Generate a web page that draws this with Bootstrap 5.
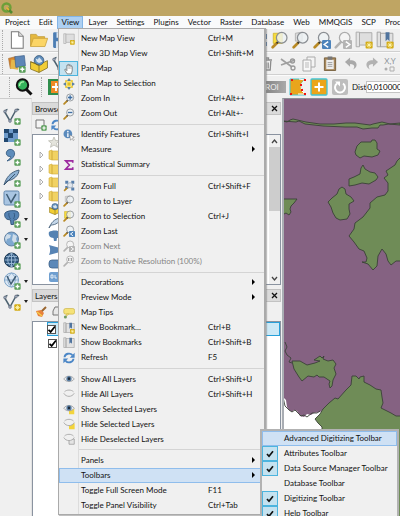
<!DOCTYPE html>
<html lang="en">
<head>
<meta charset="utf-8">
<meta name="viewport" content="width=device-width, initial-scale=1">
<title>QGIS</title>
<link href="https://cdn.jsdelivr.net/npm/bootstrap@5.3.0/dist/css/bootstrap.min.css" rel="stylesheet">
<style>
  body { font: 8px/10px Lato, "Liberation Sans", sans-serif; color: #111; background: #f0f0f0; }
  svg { display: block; flex: none; }
  button { font: inherit; color: inherit; border: 0; background: none; padding: 0; }
  .titlebar { height: 16px; background: #bfa563; padding-left: 1px; }
  .menubar { height: 13px; background: #f9fafb; }
  .menubar .nav-link { padding: 0 4px 0 5px; line-height: 13px; color: #111; font-size: 8px; border: 0; }
  .menubar .nav-link.show { background: #add0f2; box-shadow: inset 0 0 0 1px #83b5e6; }
  .toolrow { height: 23px; border-bottom: 1px solid #d0d0d0; }
  .toolrow + .toolrow { border-top: 1px solid #fbfbfb; }
  .lead-tools { flex: 0 0 258px; padding-left: 2px; }
  .lead-tools.indent { padding-left: 9px; }
  .tools { gap: 3px; }
  .grip { width: 2px; height: 20px; border-left: 1px dotted #aaa; }
  .ic18 { width: 18px; height: 18px; }
  .ic12 { width: 12px; height: 12px; }
  .roi { width: 28px; height: 12px; background: linear-gradient(90deg, #777, #aaa); color: #eee; }
  .dist { width: 60px; height: 12px; border: 1px solid #c4c4c4; background: #fff; padding: 0; font: inherit; flex: none; }
  .sidebar { width: 32px; padding-top: 8px; border-right: 1px solid #e2e2e2; border-top: 1px solid #ccc; }
  .side-tools { height: 204px; padding-left: 3px; }
  .caret { border: 2px solid transparent; border-top: 3px solid #222; border-bottom: 0; margin-left: 3px; }
  .docks { width: 250px; padding-right: 1px; }
  .dock-head { height: 13px; background: #dadada; border: 1px solid #c2c2c2; padding: 0 2px; }
  .dock-tools { height: 19px; padding-left: 3px; }
  .tree { height: 151px; background: #fff; border: 1px solid #8a93a0; padding-left: 6px; }
  .scroller { width: 11px; background: #f0f0f0; }
  .thumb { height: 64px; background: #cdcdcd; }
  .layers { background: #fff; border: 1px solid #8a93a0; border-bottom: 0; }
  .layer-row { height: 14px; padding-left: 15px; }
  .layer-row.active { background: #cbe8f6; box-shadow: inset 0 0 0 1px #26a0da; }
  .layer-row input { appearance: none; width: 9px; height: 9px; border: 1px solid #555; background: #fff; margin: 0; }
  .layer-row input:checked { background: #fff url("data:image/svg+xml,%3Csvg xmlns='http://www.w3.org/2000/svg' viewBox='0 0 8 8'%3E%3Cpath d='M1 4l2 2 4-5' fill='none' stroke='%23000' stroke-width='1.6'/%3E%3C/svg%3E") center/8px no-repeat; }
  .blank { width: 14px; flex: none; background: #fff; }
  .map { border-left: 2px solid #a9adb3; border-top: 1px solid #8d8d95; background: #fff; }
  .popup { --bs-dropdown-bg: #f0f0f0; --bs-dropdown-border-radius: 0; --bs-dropdown-min-width: 0; --bs-dropdown-padding-y: 0; position: absolute; font-size: 8px; color: #111; border: 1px solid #aaa; }
  .popup .dropdown-item { height: 15px; padding: 0; color: #111; line-height: 15px; }
  .popup .dropdown-item:disabled { color: #858585; }
  .popup .dropdown-item.hot { background: #cfe1f4; box-shadow: inset 0 0 0 1px #8fbdec; }
  .view-menu { left: 58px; top: 28px; bottom: 1px; width: 208px; box-shadow: 1px 1px 1px #8888; border-right: 2px solid #aaa; padding-top: 2px; padding-bottom: 1px; background-image: linear-gradient(90deg, transparent 19px, #dcdcdc 19px, #dcdcdc 20px, transparent 20px); }
  .icon-cell { width: 19px; height: 15px; }
  .icon-cell.on { background: #c4e2f0; box-shadow: inset 0 0 0 1px #4cb4de; }
  .caption { padding-left: 3px; }
  .keys { width: 56px; }
  .rule { flex: 1; margin-left: 20px; background: linear-gradient(#d4d4d4, #d4d4d4) center/100% 1px no-repeat; }
  .arrow { border: 3px solid transparent; border-left: 3px solid #000; border-right: 0; margin: 4px 0 0 44px; width: 0; height: 0; }
  .bars-menu { left: 260px; right: 1px; top: 429px; border-width: 2px; border-color: #b2b2b2; }
  .bars-menu input { appearance: none; width: 16px; height: 15px; margin: 0; flex: none; }
  .bars-menu input:checked { background: #c4e2f0 url("data:image/svg+xml,%3Csvg xmlns='http://www.w3.org/2000/svg' viewBox='0 0 8 8'%3E%3Cpath d='M1 4l2 2.200 4-5' fill='none' stroke='%23111' stroke-width='1.700'/%3E%3C/svg%3E") center/8px no-repeat; box-shadow: inset 0 0 0 1px #4cb4de; }
  .bars-menu .caption { padding-left: 6px; }
</style>
<script src="https://cdn.jsdelivr.net/npm/bootstrap@5.3.0/dist/js/bootstrap.bundle.min.js"></script>
</head>
<body class="vh-100 overflow-hidden d-flex flex-column position-relative">
<svg width="0" height="0" class="position-absolute" aria-hidden="true">
  <defs>
    <symbol id="plus" viewBox="0 0 6 6"><rect x=".3" y=".3" width="5.400" height="5.400" rx="1" fill="#5a9e5a"/><path d="M3 1.300v3.400M1.300 3h3.400" stroke="#fff" stroke-width="1.200"/></symbol>
    <symbol id="star" viewBox="0 0 6 6"><rect x=".3" y=".3" width="5.400" height="5.400" rx=".8" fill="#d4ac16"/><path d="M3 1v4M1 3h4M1.700 1.700l2.600 2.600M4.300 1.700L1.700 4.300" stroke="#fff6b0" stroke-width=".7"/></symbol>
    <symbol id="glass" viewBox="0 0 16 16"><path d="M1.500 14.500l4-4" stroke="#b98a24" stroke-width="2.400" stroke-linecap="round"/><path d="M5 11l1.500-1.500" stroke="#333" stroke-width="1.500"/><circle cx="9.500" cy="6" r="4.700" fill="#eef2f5" fill-opacity=".8" stroke="#8b8f94" stroke-width="1.100"/></symbol>
    <symbol id="glassoff" viewBox="0 0 16 16"><path d="M1.500 14.500l5-5" stroke="#b2b2b2" stroke-width="2.200" stroke-linecap="round"/><circle cx="9.500" cy="6" r="4.700" fill="#f4f4f4" stroke="#acacac" stroke-width="1.100"/></symbol>
    <symbol id="zin" viewBox="0 0 16 16"><use href="#glass"/><path d="M9.500 3v6M6.500 6h6" stroke="#3f6ea3" stroke-width="1.800"/></symbol>
    <symbol id="zout" viewBox="0 0 16 16"><use href="#glass"/><path d="M6.500 6h6" stroke="#3f6ea3" stroke-width="1.800"/></symbol>
    <symbol id="zfull" viewBox="0 0 16 16"><path d="M3 1h4v4H3zM11 1h4v4h-4zM11 10h4v4h-4zM3 8h4v4H3z" fill="#587fac"/><path d="M5 5l8 6M13 4L4 13" stroke="#7f98b4"/><circle cx="9.500" cy="7" r="3.500" fill="#dfe6ee" stroke="#97a6b5"/><path d="M1.500 14.500l4-4" stroke="#b98a24" stroke-width="2.200"/></symbol>
    <symbol id="zlayer" viewBox="0 0 16 16"><path d="M3 2l6-1v8H3z" fill="#ddd" stroke="#aaa" stroke-width=".7"/><use href="#glass"/></symbol>
    <symbol id="zsel" viewBox="0 0 16 16"><path d="M2 2h8v9H2z" fill="#f7dc3c" stroke="#cdb22c" stroke-width=".7"/><use href="#glass"/></symbol>
    <symbol id="zlast" viewBox="0 0 16 16"><use href="#glass"/><rect x="8" y="8" width="8" height="8" rx="1" fill="#4c83bb"/><path d="M13.500 9.500L10 12l3.500 2.500" fill="none" stroke="#fff" stroke-width="1.300"/></symbol>
    <symbol id="znext" viewBox="0 0 16 16"><use href="#glassoff"/><rect x="8" y="8" width="8" height="8" rx="1" fill="#b4b4b4"/><path d="M10.500 9.500L14 12l-3.500 2.500" fill="none" stroke="#fff" stroke-width="1.300"/></symbol>
    <symbol id="znat" viewBox="0 0 16 16"><use href="#glassoff"/><path d="M7.500 4v4M11.500 4v4M9.500 4.500v.8M9.500 6.500v.8" stroke="#888" stroke-width="1.200"/></symbol>
    <symbol id="mapnew" viewBox="0 0 16 16"><path d="M1 1h3v13H1z" fill="#e4e4e4" stroke="#a8a8a8" stroke-width=".8"/><path d="M4 1.500h11v11H4z" fill="#dedede" stroke="#a8a8a8" stroke-width=".8"/><use href="#star" x="9" y="9" width="7" height="7"/></symbol>
    <symbol id="bmshow" viewBox="0 0 16 16"><path d="M1 1h3v13H1zM4 2h11v12H4z" fill="#e2e2e2" stroke="#a0a0a0" stroke-width=".8"/><path d="M8.500 1h3.500v8l-1.700-1.600L8.500 9z" fill="#50749e"/></symbol>
    <symbol id="bmnew" viewBox="0 0 16 16"><use href="#bmshow"/><use href="#star" x="9" y="9" width="7" height="7"/></symbol>
    <symbol id="hand" viewBox="0 0 16 16"><path d="M5.500 14.500L2.500 9.500c-.6-1.200.8-1.800 1.500-.8l1.200 1.500V3.500c0-1.300 1.600-1.300 1.700 0V2.600c.1-1.200 1.700-1.200 1.800 0v.9c.1-1.200 1.700-1.100 1.800 0v1.200c.2-1 1.700-.9 1.800.2v5.500l-1.200 4.100z" fill="#fff" stroke="#555" stroke-width=".9"/><path d="M7 4v4M8.800 4v4M10.600 5v3" stroke="#888" stroke-width=".6"/></symbol>
    <symbol id="pansel" viewBox="0 0 16 16"><path d="M4 3l4-2 4 2 3 5-3 5-4 2-4-2-3-5z" fill="#f6e27c"/><path d="M8 0l2.500 4h-5zM8 16l2.500-4h-5zM0 8l4-2.500v5zM16 8l-4-2.500v5z" fill="#587fac"/><path d="M6 6h4v4H6zM3 3h2v2H3zM11 3h2v2h-2zM3 11h2v2H3zM11 11h2v2h-2z" fill="#e3bd18"/></symbol>
    <symbol id="ident" viewBox="0 0 16 16"><circle cx="6.500" cy="6.500" r="5.800" fill="#5b8bbd"/><path d="M6.500 5.500v5" stroke="#fff" stroke-width="1.800"/><circle cx="6.500" cy="3.500" r="1.100" fill="#fff"/><path d="M9 8l6 3-2.500 1 2.500 2.500-1.200 1-2.300-2.500L10 15z" fill="#fff" stroke="#777" stroke-width=".7"/></symbol>
    <symbol id="sigma" viewBox="0 0 16 16"><path d="M13 5V2.500H3.500L8.500 8l-5 5.500H13V11" fill="none" stroke="#9c2aa0" stroke-width="2.200"/></symbol>
    <symbol id="tip" viewBox="0 0 16 16"><rect x="1" y="2" width="14.500" height="7.500" rx="2.500" fill="#f5e278" stroke="#c6ac3a" stroke-width=".8"/><path d="M5 9l-1 4 4-4z" fill="#f5e278" stroke="#c6ac3a" stroke-width=".6"/><circle cx="3.200" cy="13.300" r="2" fill="#6f9a62"/></symbol>
    <symbol id="refresh" viewBox="0 0 16 16"><path d="M2 7c.6-5 7.500-6.500 10.500-2.800" fill="none" stroke="#4b86c6" stroke-width="2.500"/><path d="M15.500 1v6.500H9z" fill="#4b86c6"/><path d="M14 9c-.6 5-7.500 6.500-10.500 2.800" fill="none" stroke="#4b86c6" stroke-width="2.500"/><path d="M.5 15V8.500H7z" fill="#4b86c6"/></symbol>
    <symbol id="eye" viewBox="0 0 16 16"><path d="M1 8c3-5 11-5 14 0-3 4.500-11 4.500-14 0z" fill="#e9ecef" stroke="#999" stroke-width="1"/><circle cx="8" cy="7.500" r="3.500" fill="#5c7fa4"/><circle cx="8" cy="7.500" r="1.700" fill="#1d2b3a"/></symbol>
    <symbol id="eyeoff" viewBox="0 0 16 16"><path d="M1 7c3 5.500 11 5.500 14 0M2 5c3-3 9-3 12 0" fill="none" stroke="#a8a8a8" stroke-width="1.200"/></symbol>
    <symbol id="eyesel" viewBox="0 0 16 16"><path d="M8 8h7v7H8z" fill="#f3d43c"/><use href="#eye" y="-1"/></symbol>
    <symbol id="hidesel" viewBox="0 0 16 16"><path d="M8 7h7.500v8H8z" fill="#f3d43c"/><path d="M1 6c3 5.500 11 5.500 14 0V4H2z" fill="#f0f0f0"/><use href="#eyeoff" y="-1"/></symbol>
    <symbol id="hidedes" viewBox="0 0 16 16"><path d="M8 8h7v7H8z" fill="#e4e4e4" stroke="#999"/><path d="M1 6c3 5.500 11 5.500 14 0V4H2z" fill="#f0f0f0"/><use href="#eyeoff" y="-1"/></symbol>
    <symbol id="page" viewBox="0 0 16 16"><path d="M3 .7h6.500l4 4v10.600H3z" fill="#fff" stroke="#777" stroke-width=".9"/><path d="M9.500 .7v4h4" fill="#ddd" stroke="#777" stroke-width=".8"/></symbol>
    <symbol id="folder" viewBox="0 0 16 16"><path d="M.5 13.500V3h5l1.500 2h6v2" fill="#e5b83f" stroke="#c19a33" stroke-width=".7"/><path d="M.5 13.800L3 6.500h12.700l-2.400 7.300z" fill="#fbd566" stroke="#c9a13a" stroke-width=".7"/></symbol>
    <symbol id="disk" viewBox="0 0 16 16"><rect x="1" y="1" width="14" height="14" rx="1" fill="#4c7db3"/><path d="M4 1h8v5H4zM3.500 9h9v6h-9z" fill="#dce6f0"/></symbol>
    <symbol id="maps" viewBox="0 0 16 16"><path d="M.5 3l6-1.500 3 8L2 12z" fill="#d7862d" stroke="#9c5b1b" stroke-width=".5"/><path d="M3 4l7 1-1 8-7-1z" fill="#e6b84b"/><path d="M6 1.500l8.500-1 1 9-8.500 1.500z" fill="#5e86b6" stroke="#3d608b" stroke-width=".6"/><use href="#plus" x="9.500" y="9.500" width="6.500" height="6.500"/></symbol>
    <symbol id="box" viewBox="0 0 16 16"><path d="M.5 6L8 8.500 15.500 5v6.500L8 15.500.5 12.500z" fill="#f1cd35" stroke="#7e6b20" stroke-width=".7"/><circle cx="8" cy="4.800" r="4.300" fill="#5f8dbb" stroke="#2b4b6b" stroke-width=".6"/><path d="M5 3l2 1 1-2 2 2 1 2-3 1-2-1z" fill="#d5e3ee"/><path d="M.5 6L8 9v6.500" fill="none" stroke="#7e6b20" stroke-width=".7"/></symbol>
    <symbol id="vee" viewBox="0 0 18 18"><path d="M1.500 4.500L7 14 13 3c1-1 2-1 3 0M1.500 4.500c1-1 1.500-2 3-2" fill="none" stroke="#4d6270" stroke-width="1.500"/><g fill="#9ab" stroke="#556"  stroke-width=".5"><circle cx="2" cy="4.500" r="1.400"/><circle cx="7" cy="14" r="1.400"/><circle cx="13" cy="3.500" r="1.400"/></g></symbol>
    <symbol id="veeadd" viewBox="0 0 18 18"><use href="#vee"/><use href="#plus" x="11" y="11" width="7" height="7"/></symbol>
    <symbol id="veenew" viewBox="0 0 18 18"><use href="#vee"/><use href="#star" x="11" y="11" width="7" height="7"/></symbol>
    <symbol id="raster" viewBox="0 0 18 18"><path d="M1 1h14v13H1z" fill="#6e9bca"/><path d="M1 1h5v4H1zM10 1h5v4h-5zM5 5h5v5H5zM1 10h4v4H1z" fill="#22486f"/><use href="#plus" x="11" y="11" width="7" height="7"/></symbol>
    <symbol id="comma" viewBox="0 0 18 18"><path d="M5 2c5-2.500 9 3 5 7.500-1.500 2-4 3-6 3.500 2-2 4-3 3.500-4.500C3 9 2 4 5 2z" fill="#5d8cba" stroke="#31557a" stroke-width=".8"/><use href="#plus" x="11" y="11" width="7" height="7"/></symbol>
    <symbol id="feather" viewBox="0 0 18 18"><path d="M1 16C3 9 7 3 16 1c0 5-5 10-12 11z" fill="#8fb2d4" stroke="#3c5873" stroke-width=".9"/><path d="M1 16L12 5" stroke="#3c5873"/><use href="#plus" x="11" y="11" width="7" height="7"/></symbol>
    <symbol id="veebox" viewBox="0 0 18 18"><rect x="1" y="1" width="15" height="14" rx="1.500" fill="#a9c5e2" stroke="#6287ad"/><path d="M3.500 4l4.500 8.500L13 4" fill="none" stroke="#3f5c74" stroke-width="1.500"/><use href="#plus" x="11" y="11" width="7" height="7"/></symbol>
    <symbol id="elephant" viewBox="0 0 18 18"><path d="M2 3c3-3 11-3 13-1 2 3 0 7-2 8h-2l-.5 4.500H8L7.500 10 5 9.500C2 9 1 5 2 3z" fill="#5482b2" stroke="#2f5277" stroke-width=".9"/><path d="M6 3c-.5 2 0 4 1.500 6M11 3c1 2 .5 4-.5 6" fill="none" stroke="#2f5277" stroke-width=".8"/><use href="#plus" x="11" y="11" width="7" height="7"/></symbol>
    <symbol id="globe" viewBox="0 0 18 18"><circle cx="8.500" cy="8" r="7" fill="#7ea8d0" stroke="#4e6f92" stroke-width=".8"/><path d="M4 3l4 1-1 3-3 1-1 3-1-4zM10 3l4 2-1 3 1 3-3 1-2-3z" fill="#cfdde9"/><use href="#plus" x="11" y="11" width="7" height="7"/></symbol>
    <symbol id="globenet" viewBox="0 0 18 18"><circle cx="8.500" cy="8" r="7" fill="#31587f" stroke="#1d3852"/><path d="M1.500 8h14M8.500 1v14M3 4.500h11M3 11.500h11M8.500 1c-5 4-5 10 0 14M8.500 1c5 4 5 10 0 14" fill="none" stroke="#9dbbd8" stroke-width=".9"/><use href="#plus" x="11" y="11" width="7" height="7"/></symbol>
    <symbol id="globev" viewBox="0 0 18 18"><circle cx="8.500" cy="8" r="7" fill="#dce8f4" stroke="#7ba2c8"/><path d="M1.500 8h14M8.500 1c-5 4-5 10 0 14M8.500 1c5 4 5 10 0 14" fill="none" stroke="#7ba2c8" stroke-width=".8"/><path d="M4 4l4 8 5-8" fill="none" stroke="#425e76" stroke-width="1.500"/><use href="#plus" x="11" y="11" width="7" height="7"/></symbol>
  </defs>
</svg>

<header class="titlebar d-flex align-items-center flex-shrink-0">
  <svg width="12" height="12" viewBox="0 0 12 12" role="img" aria-label="QGIS"><circle cx="5.500" cy="5.500" r="4" fill="none" stroke="#6d9f38" stroke-width="2.400"/><path d="M6 6l5 5" stroke="#4f8a2d" stroke-width="2.600"/><path d="M5.500 5.500l2.500 2.500" stroke="#e8b33a" stroke-width="1.800"/></svg>
</header>

<nav class="menubar nav flex-nowrap flex-shrink-0 overflow-hidden">
  <a class="nav-link" href="#">Project</a><a class="nav-link" href="#">Edit</a><a class="nav-link show" href="#">View</a><a class="nav-link" href="#">Layer</a><a class="nav-link" href="#">Settings</a><a class="nav-link" href="#">Plugins</a><a class="nav-link" href="#">Vector</a><a class="nav-link" href="#">Raster</a><a class="nav-link" href="#">Database</a><a class="nav-link" href="#">Web</a><a class="nav-link" href="#">MMQGIS</a><a class="nav-link" href="#">SCP</a><a class="nav-link" href="#">Processing</a>
</nav>

<div class="toolrow d-flex align-items-center flex-shrink-0 overflow-hidden">
  <div class="lead-tools d-flex align-items-center gap-1">
    <span class="grip"></span>
    <button aria-label="New project"><svg class="ic18"><use href="#page"/></svg></button>
    <button aria-label="Open project"><svg class="ic18"><use href="#folder"/></svg></button>
    <button aria-label="Save project"><svg class="ic18"><use href="#disk"/></svg></button>
  </div>
  <div class="tools d-flex align-items-center">
    <button aria-label="Zoom full"><svg width="10" height="14" viewBox="0 0 10 14"><path d="M3 1h6v5H3zM3 9h6v4H3z" fill="#3f6a9b"/></svg></button>
    <button aria-label="Zoom to selection"><svg class="ic18"><use href="#zsel"/></svg></button>
    <button aria-label="Zoom to layer"><svg class="ic18"><use href="#zlayer"/></svg></button>
    <button aria-label="Zoom last"><svg class="ic18"><use href="#zlast"/></svg></button>
    <button aria-label="Zoom next"><svg class="ic18"><use href="#znext"/></svg></button>
    <button aria-label="New map view"><svg class="ic18"><use href="#mapnew"/></svg></button>
    <button aria-label="New bookmark"><svg class="ic18"><use href="#bmnew"/></svg></button>
  </div>
</div>

<div class="toolrow d-flex align-items-center flex-shrink-0 overflow-hidden">
  <div class="lead-tools d-flex align-items-center gap-1">
    <span class="grip"></span>
    <button aria-label="Data source manager"><svg class="ic18"><use href="#maps"/></svg></button>
    <button aria-label="New GeoPackage layer"><svg class="ic18"><use href="#box"/></svg></button>
    <button aria-label="New shapefile layer"><svg class="ic18"><use href="#vee"/></svg></button>
  </div>
  <div class="tools d-flex align-items-center">
    <button aria-label="Delete selected"><svg width="18" height="14" viewBox="0 0 12 14"><path d="M1 3h10M4.500 3V1h3v2M2.200 4l.6 9h6.400l.6-9M4.800 5.500v6M7.200 5.500v6" fill="none" stroke="#8c8c8c" stroke-width="1.300"/></svg></button>
    <button aria-label="Cut"><svg class="ic18" viewBox="0 0 18 18"><path d="M2 4l11 8M2 10l14-5" stroke="#a0a0a0" stroke-width="1.700"/><circle cx="13.500" cy="6" r="2" fill="none" stroke="#999" stroke-width="1.300"/><circle cx="14" cy="13" r="2" fill="none" stroke="#999" stroke-width="1.300"/></svg></button>
    <button aria-label="Copy"><svg class="ic18" viewBox="0 0 18 18"><path d="M7 2h8v10H7z" fill="#f4f4f4" stroke="#aaa"/><path d="M3 5h8v11H3z" fill="#f8f8f8" stroke="#aaa"/><path d="M5 8h4M5 10h4M5 12h4" stroke="#bbb"/></svg></button>
    <button aria-label="Paste"><svg width="18" height="15" viewBox="0 0 14 16"><path d="M1 2h12v13.500H1z" fill="#a8885c" stroke="#77603e"/><path d="M3 4h8v10H3z" fill="#eee"/><path d="M4.500.5h5V4h-5z" fill="#777"/><path d="M4.500 7h5M4.500 9h5M4.500 11h5" stroke="#888" stroke-width=".8"/></svg></button>
    <button aria-label="Undo"><svg width="18" height="13" viewBox="0 0 14 14"><path d="M6 .5v3c5 0 7 2 7 5 0 2-2 4-4 5 1-1 1.500-2 1.500-3 0-2-1.500-3-4.500-3v3L.5 5.500z" fill="#a9a9a9"/></svg></button>
    <button aria-label="Redo"><svg width="18" height="13" viewBox="0 0 14 14"><path d="M8 .5v3c-5 0-7 2-7 5 0 2 2 4 4 5-1-1-1.500-2-1.500-3 0-2 1.500-3 4.500-3v3l5.500-5z" fill="#b2b2b2"/></svg></button>
    <button class="d-flex flex-column align-items-center text-secondary opacity-75" aria-label="Advanced digitizing">X,Y<svg width="12" height="6" viewBox="0 0 12 6"><circle cx="2" cy="3" r="1.500" fill="#999"/><path d="M6 1h4v4H6z" fill="none" stroke="#999"/></svg></button>
  </div>
</div>

<div class="toolrow d-flex align-items-center flex-shrink-0 overflow-hidden border-bottom-0">
  <div class="lead-tools indent d-flex align-items-center">
    <span class="grip me-1"></span>
    <button aria-label="Search layers"><svg class="ic18" viewBox="0 0 18 18"><path d="M11 11l5.500 5.500" stroke="#111" stroke-width="3"/><circle cx="7.500" cy="7" r="5.700" fill="#35b35c" stroke="#111" stroke-width="2"/><path d="M4.500 8c0-3 2-4.500 4.500-4" fill="none" stroke="#a8f0a8" stroke-width="1.400"/></svg></button>
    <span class="grip ms-2 me-1"></span>
    <button aria-label="Classification plugin"><svg class="ic18" viewBox="0 0 18 18"><path d="M1 1h15v16H1z" fill="#2f8d4c"/><path d="M4 3h12v12H4z" fill="#f08a24"/><path d="M9 5v8M5 9h8" stroke="#fff" stroke-width="1.800"/></svg></button>
  </div>
  <div class="tools d-flex align-items-center flex-shrink-0">
    <span class="roi d-flex align-items-center justify-content-center">ROI</span>
    <button aria-label="Draw region"><svg class="ic18" viewBox="0 0 18 18"><path d="M1 1h15l-4 5 1 7 4 4H1z" fill="#e9a51c" stroke="#41c4d4"/><path d="M10 1l6 1-4 4.500.5 6L16 16H9" fill="none" stroke="#fff"/><path d="M2 1h2v2H2zM15 1h2v2h-2zM11 6h2v2h-2zM12 11h2v2h-2zM15 15h2v2h-2zM1 15h2v2H1z" fill="#e11"/></svg></button>
    <button aria-label="Add region"><svg class="ic18" viewBox="0 0 18 18"><rect x="1" y="1" width="16" height="16" rx="1" fill="#eca51a" stroke="#41c4d4" stroke-width="1.300"/><path d="M9 4.500v9M4.500 9h9" stroke="#fff" stroke-width="2"/></svg></button>
    <button aria-label="Redo region"><svg class="ic18" viewBox="0 0 18 18"><rect x="1" y="1" width="16" height="16" rx="2" fill="#bebebe"/><path d="M6 5.500a5 5 0 1 0 6 0" fill="none" stroke="#fff" stroke-width="2"/><path d="M4 3.500h5v5z" fill="#fff"/></svg></button>
    <label for="dist">Dist</label>
  </div>
  <input class="dist" id="dist" value="0,010000">
</div>

<main class="d-flex flex-grow-1 overflow-hidden">
  <aside class="sidebar flex-shrink-0">
    <div class="side-tools d-flex flex-column justify-content-between">
      <button class="d-flex align-items-center" aria-label="Add vector layer"><svg class="ic18"><use href="#veeadd"/></svg></button>
      <button class="d-flex align-items-center" aria-label="Add raster layer"><svg class="ic18"><use href="#raster"/></svg></button>
      <button class="d-flex align-items-center" aria-label="Add delimited text layer"><svg class="ic18"><use href="#comma"/></svg></button>
      <button class="d-flex align-items-center" aria-label="Add SpatiaLite layer"><svg class="ic18"><use href="#feather"/></svg></button>
      <button class="d-flex align-items-center" aria-label="Add virtual layer"><svg class="ic18"><use href="#veebox"/></svg></button>
      <button class="d-flex align-items-center" aria-label="Add PostGIS layer"><svg class="ic18"><use href="#elephant"/></svg><span class="caret"></span></button>
      <button class="d-flex align-items-center" aria-label="Add WMS layer"><svg class="ic18"><use href="#globe"/></svg><span class="caret"></span></button>
      <button class="d-flex align-items-center" aria-label="Add WCS layer"><svg class="ic18"><use href="#globenet"/></svg></button>
      <button class="d-flex align-items-center" aria-label="Add WFS layer"><svg class="ic18"><use href="#globev"/></svg><span class="caret"></span></button>
      <button class="d-flex align-items-center" aria-label="New layer"><svg class="ic18"><use href="#veenew"/></svg><span class="caret"></span></button>
    </div>
  </aside>

  <section class="docks d-flex flex-column flex-shrink-0 pt-1">
    <div class="dock-head d-flex justify-content-between align-items-center"><span>Browser</span><button aria-label="Close browser"><svg width="7" height="7" viewBox="0 0 7 7"><path d="M1 1l5 5M6 1L1 6" stroke="#111" stroke-width="1.300"/></svg></button></div>
    <div class="dock-tools d-flex align-items-center gap-1">
      <button aria-label="Add layer"><svg class="ic12" viewBox="0 0 12 12"><path d="M1 1h8v8H1z" fill="#f4f4f4" stroke="#777"/><use href="#plus" x="6" y="6" width="6" height="6"/></svg></button>
      <button aria-label="Refresh browser"><svg class="ic12"><use href="#refresh"/></svg></button>
    </div>
    <div class="tree d-flex">
      <div class="d-flex flex-column justify-content-around flex-grow-1">
        <svg width="24" height="12" viewBox="0 0 24 12"><path d="M15 1l1.500 3.500 4 .3-3 2.500 1 4L15 9l-3.500 2.300 1-4-3-2.500 4-.3z" fill="#e4e4dc" stroke="#b5b5aa" stroke-width=".7"/></svg>
        <svg width="24" height="12" viewBox="0 0 24 12"><path d="M1 3l3 3-3 3z" fill="#fff" stroke="#999" stroke-width=".8"/><path d="M10 2l3-1v10l-3-1zM13 2h8v9h-8z" fill="#f1d263" stroke="#d0ac3a" stroke-width=".6"/></svg>
        <svg width="24" height="12" viewBox="0 0 24 12"><path d="M1 3l3 3-3 3z" fill="#fff" stroke="#999" stroke-width=".8"/><path d="M10 2l3-1v10l-3-1zM13 2h8v9h-8z" fill="#f1d263" stroke="#d0ac3a" stroke-width=".6"/></svg>
        <svg width="24" height="12" viewBox="0 0 24 12"><path d="M1 3l3 3-3 3z" fill="#fff" stroke="#999" stroke-width=".8"/><path d="M10 2l3-1v10l-3-1zM13 2h8v9h-8z" fill="#f1d263" stroke="#d0ac3a" stroke-width=".6"/></svg>
        <svg width="24" height="12" viewBox="0 0 24 12"><path d="M1 3l3 3-3 3z" fill="#fff" stroke="#999" stroke-width=".8"/><path d="M10 2l3-1v10l-3-1zM13 2h8v9h-8z" fill="#f1d263" stroke="#d0ac3a" stroke-width=".6"/></svg>
        <svg width="24" height="12" viewBox="0 0 24 12"><use href="#box" x="10" width="12" height="12"/></svg>
        <svg width="24" height="12" viewBox="0 0 24 12"><path d="M10 11C12 6 15 2 21 1c0 4-4 7-9 7z" fill="#c4d6e8" stroke="#4c6680" stroke-width=".9"/></svg>
        <svg width="24" height="12" viewBox="0 0 24 12"><path d="M10 2c3-2 9-2 11 0 1 3 0 5-2 6h-1l-.5 3H15l-.5-3C11 8 9 5 10 2z" fill="#5482b2"/></svg>
        <svg width="24" height="12" viewBox="0 0 24 12"><path d="M10 1l11 3v4l-11 3c1.500-3 1.500-7 0-10z" fill="#5884b4"/></svg>
        <svg width="24" height="12" viewBox="0 0 24 12"><rect x="10" y="2" width="14" height="8" rx="3" fill="#5b88b8" stroke="#3f6288" stroke-width=".8"/></svg>
        <svg width="24" height="12" viewBox="0 0 24 12"><rect x="10" y="1" width="14" height="10" rx="2" fill="#6f9fd0"/><path d="M12 4h2v3h-2zM16 4v3h2M20 4v3" fill="none" stroke="#fff" stroke-width=".8"/></svg>
      </div>
      <div class="scroller d-flex flex-column align-items-stretch">
        <svg width="11" height="12" viewBox="0 0 11 12"><path d="M3 8l2.500-3L8 8" fill="none" stroke="#444" stroke-width="1.300"/></svg>
        <div class="thumb"></div>
        <svg class="mt-auto" width="11" height="12" viewBox="0 0 11 12"><path d="M3 5l2.500 3L8 5" fill="none" stroke="#444" stroke-width="1.300"/></svg>
      </div>
    </div>
    <div class="dock-head d-flex justify-content-between align-items-center mt-1"><span>Layers</span><button aria-label="Close layers"><svg width="7" height="7" viewBox="0 0 7 7"><path d="M1 1l5 5M6 1L1 6" stroke="#111" stroke-width="1.300"/></svg></button></div>
    <div class="dock-tools d-flex align-items-center gap-1">
      <button aria-label="Layer styling"><svg class="ic12" viewBox="0 0 12 12"><path d="M11 1L6 6" stroke="#9a6630" stroke-width="2"/><path d="M1 5l5-1 3 3-2 4-4-1z" fill="#e8813c"/><path d="M2 6l5 4" stroke="#f5cf4a" stroke-width="1.400"/></svg></button>
      <button aria-label="Add group"><svg class="ic12" viewBox="0 0 12 12"><path d="M2 5l2-4h6v8H2z" fill="#e8e8e8" stroke="#777"/></svg></button>
    </div>
    <div class="layers flex-grow-1">
      <div class="d-flex"><span class="blank"></span><div class="layer-row active d-flex align-items-center flex-grow-1 ps-0"><input type="checkbox" checked aria-label="Layer 1"></div></div>
      <div class="layer-row d-flex align-items-center"><input type="checkbox" checked aria-label="Layer 2"></div>
    </div>
  </section>

  <section class="map flex-grow-1 overflow-hidden">
    <svg width="100%" height="100%" viewBox="284 99 116 417" preserveAspectRatio="xMinYMin slice">
      <path fill="#856282" d="M283 98H401V422L396 419 390 416 382 411 330 405 320 412 314 413 311 415 307 414 304 417 300 416 297 411 294 410 292 412 289 410 287 407 286 400 283 397z"/>
      <g fill="#6f8c57" stroke="#3b4238" stroke-width=".9" stroke-linejoin="round">
        <path d="M283 121l4 1 3-2 3-1 13 3 14 2h14l12-1h9l15 2 3-1 9-2 8 2 10-1v2l-11-1-6 1-3 0-2 3-6 0-9 1-6-2-12 0-22-1-18-2-6-3-3 1z"/>
        <path d="M355 152l2-6 4-4 10 0 1-2 3 0 2 3 0 6 3 2-2 4-6 2-8-1-4 2-4-3z"/>
        <path d="M349 179l5-2 6-3 1-6 2-3 2 4 5 3 5 1 3 4-2 3-7 4-7-1-7 2-6 1v-4z"/>
        <path d="M328 202l4-4 5-4 2-5 3-2 3 2 1 5 5 3 3 4-5 3 0 5 1 5-3 5-7 1-4-2-3-5-2-6z"/>
        <path d="M283 199l14 0-3 4-3 3-1 3 1 3-2 3-3-2-4 2z"/>
        <path d="M401 157l-4 4-2 4-6 4-3 2 2 4-4 3 4 5 0 8-3 4-8 2-7 6 0 5-7 9-4 3-4 3-1 6-5 7 5 6 5 7 5 2 3 7-1 4-4 0 6 2 5 6 4-4 1-10 4-7 4 5 2 7 3 4 5-4 6 0z"/>
        <path d="M292 361l8 0 7 4 8-2 5-2-6-1 3-2 3-2 2 2 2-2-1 3 5 2 5-1 3 4-2 4 2 6-3 6-1 6-2 2-1-4 1-3-6-4-5 0-2-2-3 2-6-1-6 5-3-4-5-8z"/>
        <path d="M315 419l5-5 3-5 6-6 6-5 3 1 8-9 5-5 1-9 4 0 3 3 1-2 4-1 0 6 6 3 6 4 5 1 1 7 1 6-2 5 10 5 5 3 5 0V517H322V427l-4-4z"/>
        <path fill="none" d="M285 342l2 5-2 4 2 4 4 3-2 4 3 1M283 397l2 9 4 4 3 2 3-2 3 3 3 3 3-1 3 2 5-4 5 0 3-2"/>
      </g>
    </svg>
  </section>
</main>

<div class="popup view-menu dropdown-menu show d-flex flex-column" role="menu">
  <button class="dropdown-item d-flex"><span class="icon-cell d-flex align-items-center justify-content-center"><svg class="ic12"><use href="#mapnew"/></svg></span><span class="caption flex-grow-1">New Map View</span><span class="keys">Ctrl+M</span></button>
  <button class="dropdown-item d-flex"><span class="icon-cell"></span><span class="caption flex-grow-1">New 3D Map View</span><span class="keys">Ctrl+Shift+M</span></button>
  <button class="dropdown-item d-flex"><span class="icon-cell on d-flex align-items-center justify-content-center"><svg class="ic12"><use href="#hand"/></svg></span><span class="caption flex-grow-1">Pan Map</span></button>
  <button class="dropdown-item d-flex"><span class="icon-cell d-flex align-items-center justify-content-center"><svg class="ic12"><use href="#pansel"/></svg></span><span class="caption flex-grow-1">Pan Map to Selection</span></button>
  <button class="dropdown-item d-flex"><span class="icon-cell d-flex align-items-center justify-content-center"><svg class="ic12"><use href="#zin"/></svg></span><span class="caption flex-grow-1">Zoom In</span><span class="keys">Ctrl+Alt++</span></button>
  <button class="dropdown-item d-flex"><span class="icon-cell d-flex align-items-center justify-content-center"><svg class="ic12"><use href="#zout"/></svg></span><span class="caption flex-grow-1">Zoom Out</span><span class="keys">Ctrl+Alt+-</span></button>
  <div class="rule"></div>
  <button class="dropdown-item d-flex"><span class="icon-cell d-flex align-items-center justify-content-center"><svg class="ic12"><use href="#ident"/></svg></span><span class="caption flex-grow-1">Identify Features</span><span class="keys">Ctrl+Shift+I</span></button>
  <button class="dropdown-item d-flex"><span class="icon-cell"></span><span class="caption flex-grow-1">Measure</span><span class="keys"><span class="arrow d-block"></span></span></button>
  <button class="dropdown-item d-flex"><span class="icon-cell d-flex align-items-center justify-content-center"><svg class="ic12"><use href="#sigma"/></svg></span><span class="caption flex-grow-1">Statistical Summary</span></button>
  <div class="rule"></div>
  <button class="dropdown-item d-flex"><span class="icon-cell d-flex align-items-center justify-content-center"><svg class="ic12"><use href="#zfull"/></svg></span><span class="caption flex-grow-1">Zoom Full</span><span class="keys">Ctrl+Shift+F</span></button>
  <button class="dropdown-item d-flex"><span class="icon-cell d-flex align-items-center justify-content-center"><svg class="ic12"><use href="#zlayer"/></svg></span><span class="caption flex-grow-1">Zoom to Layer</span></button>
  <button class="dropdown-item d-flex"><span class="icon-cell d-flex align-items-center justify-content-center"><svg class="ic12"><use href="#zsel"/></svg></span><span class="caption flex-grow-1">Zoom to Selection</span><span class="keys">Ctrl+J</span></button>
  <button class="dropdown-item d-flex"><span class="icon-cell d-flex align-items-center justify-content-center"><svg class="ic12"><use href="#zlast"/></svg></span><span class="caption flex-grow-1">Zoom Last</span></button>
  <button class="dropdown-item d-flex" disabled><span class="icon-cell d-flex align-items-center justify-content-center"><svg class="ic12"><use href="#znext"/></svg></span><span class="caption flex-grow-1">Zoom Next</span></button>
  <button class="dropdown-item d-flex" disabled><span class="icon-cell d-flex align-items-center justify-content-center"><svg class="ic12"><use href="#znat"/></svg></span><span class="caption flex-grow-1">Zoom to Native Resolution (100%)</span></button>
  <div class="rule"></div>
  <button class="dropdown-item d-flex"><span class="icon-cell"></span><span class="caption flex-grow-1">Decorations</span><span class="keys"><span class="arrow d-block"></span></span></button>
  <button class="dropdown-item d-flex"><span class="icon-cell"></span><span class="caption flex-grow-1">Preview Mode</span><span class="keys"><span class="arrow d-block"></span></span></button>
  <button class="dropdown-item d-flex"><span class="icon-cell d-flex align-items-center justify-content-center"><svg class="ic12"><use href="#tip"/></svg></span><span class="caption flex-grow-1">Map Tips</span></button>
  <button class="dropdown-item d-flex"><span class="icon-cell d-flex align-items-center justify-content-center"><svg class="ic12"><use href="#bmnew"/></svg></span><span class="caption flex-grow-1">New Bookmark...</span><span class="keys">Ctrl+B</span></button>
  <button class="dropdown-item d-flex"><span class="icon-cell d-flex align-items-center justify-content-center"><svg class="ic12"><use href="#bmshow"/></svg></span><span class="caption flex-grow-1">Show Bookmarks</span><span class="keys">Ctrl+Shift+B</span></button>
  <button class="dropdown-item d-flex"><span class="icon-cell d-flex align-items-center justify-content-center"><svg class="ic12"><use href="#refresh"/></svg></span><span class="caption flex-grow-1">Refresh</span><span class="keys">F5</span></button>
  <div class="rule"></div>
  <button class="dropdown-item d-flex"><span class="icon-cell d-flex align-items-center justify-content-center"><svg class="ic12"><use href="#eye"/></svg></span><span class="caption flex-grow-1">Show All Layers</span><span class="keys">Ctrl+Shift+U</span></button>
  <button class="dropdown-item d-flex"><span class="icon-cell d-flex align-items-center justify-content-center"><svg class="ic12"><use href="#eyeoff"/></svg></span><span class="caption flex-grow-1">Hide All Layers</span><span class="keys">Ctrl+Shift+H</span></button>
  <button class="dropdown-item d-flex"><span class="icon-cell d-flex align-items-center justify-content-center"><svg class="ic12"><use href="#eyesel"/></svg></span><span class="caption flex-grow-1">Show Selected Layers</span></button>
  <button class="dropdown-item d-flex"><span class="icon-cell d-flex align-items-center justify-content-center"><svg class="ic12"><use href="#hidesel"/></svg></span><span class="caption flex-grow-1">Hide Selected Layers</span></button>
  <button class="dropdown-item d-flex"><span class="icon-cell d-flex align-items-center justify-content-center"><svg class="ic12"><use href="#hidedes"/></svg></span><span class="caption flex-grow-1">Hide Deselected Layers</span></button>
  <div class="rule"></div>
  <button class="dropdown-item d-flex"><span class="icon-cell"></span><span class="caption flex-grow-1">Panels</span><span class="keys"><span class="arrow d-block"></span></span></button>
  <button class="dropdown-item hot d-flex"><span class="icon-cell"></span><span class="caption flex-grow-1">Toolbars</span><span class="keys"><span class="arrow d-block"></span></span></button>
  <button class="dropdown-item d-flex"><span class="icon-cell"></span><span class="caption flex-grow-1">Toggle Full Screen Mode</span><span class="keys">F11</span></button>
  <button class="dropdown-item d-flex"><span class="icon-cell"></span><span class="caption flex-grow-1">Toggle Panel Visibility</span><span class="keys">Ctrl+Tab</span></button>
</div>

<div class="popup bars-menu dropdown-menu show">
  <label class="dropdown-item hot d-flex"><input type="checkbox"><span class="caption">Advanced Digitizing Toolbar</span></label>
  <label class="dropdown-item d-flex"><input type="checkbox" checked><span class="caption">Attributes Toolbar</span></label>
  <label class="dropdown-item d-flex"><input type="checkbox" checked><span class="caption">Data Source Manager Toolbar</span></label>
  <label class="dropdown-item d-flex"><input type="checkbox"><span class="caption">Database Toolbar</span></label>
  <label class="dropdown-item d-flex"><input type="checkbox" checked><span class="caption">Digitizing Toolbar</span></label>
  <label class="dropdown-item d-flex"><input type="checkbox" checked><span class="caption">Help Toolbar</span></label>
</div>
</body>
</html>
